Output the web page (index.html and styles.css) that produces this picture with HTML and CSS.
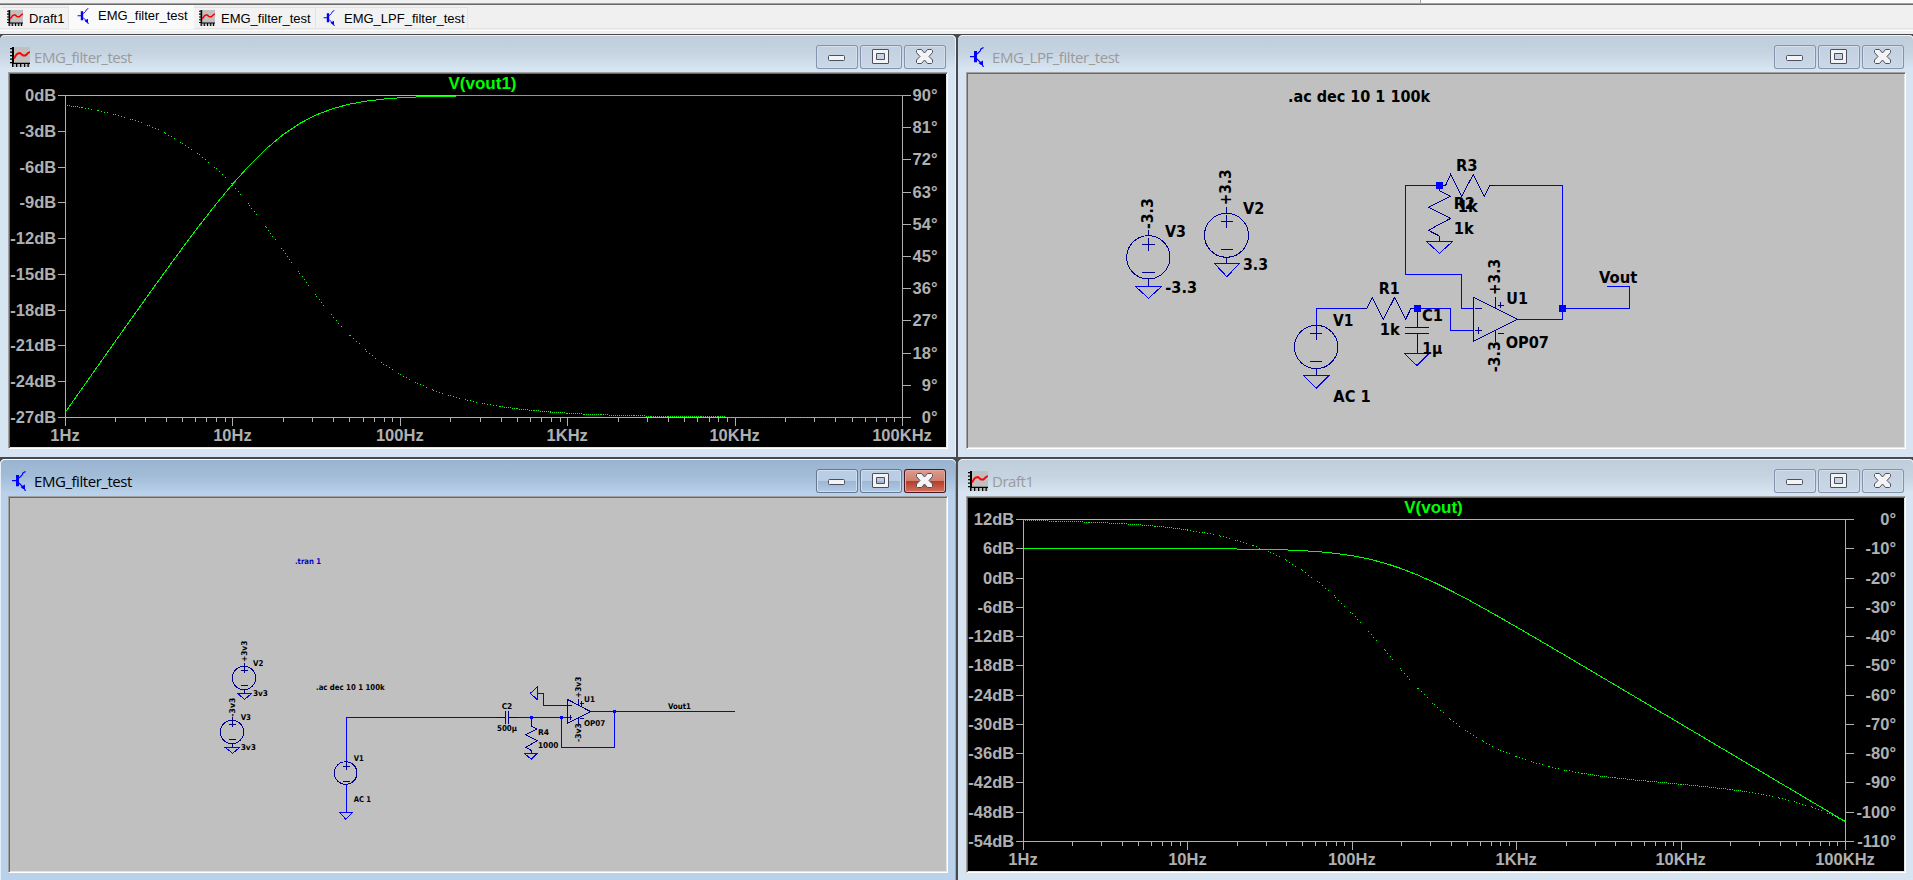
FILE: index.html
```html
<!DOCTYPE html>
<html lang="en">
<head>
<meta charset="utf-8">
<title>LTspice</title>
<link rel="stylesheet" href="styles.css">
</head>
<body>
<svg class="defs" width="0" height="0">
  <symbol id="i-plot" viewBox="0 0 20 20">
    <path fill="#c0c0c0" d="M2 0h18v20H2z"/>
    <path fill="#000" d="M2 0h2v17H2zM2 15.7h18V17H2zM0 1h2v1.3H0zM0 4.5h2v1.3H0zM0 8h2v1.3H0zM0 11.500h2v1.3H0zM0 15h2v1.3H0zM2 17h1.500v3H2zM6 17h1.300v3H6zM10 17h1.300v3H10zM14 17h1.300v3H14zM17.500 17h1.300v3h-1.300z"/>
    <path fill="none" stroke="#f00" stroke-width="1.900" d="M4 11.500L6.500 7.500 8 6.500 10 6 13 8.500 15.500 8.500 18 6 20 5"/>
  </symbol>
  <symbol id="i-sch" viewBox="0 0 20 20">
    <path fill="#00f" d="M2 9h4v1.300H2zM6 4h3v11.300H6z"/>
    <path fill="none" stroke="#00f" stroke-width="1.200" d="M9 7L12 4.200 13 2 15.500.5M9 12l5 5 1.500 3"/>
    <path fill="#00f" d="M10.500 16l4.500-2.500v4.500H13z"/>
  </symbol>
  <symbol id="i-min" viewBox="0 0 42 24"><rect x="12.500" y="10.500" width="16" height="5" rx="1" fill="#f4f4f4" stroke="#4c4f60"/></symbol>
  <symbol id="i-max" viewBox="0 0 42 24"><path fill="#f4f4f4" fill-rule="evenodd" stroke="#4c4f60" d="M13 4.500h15q.5 0 .5.500v13q0 .5-.5.500H13q-.5 0-.5-.5V5q0-.5.5-.5zM16.500 8.500v6h8v-6z"/></symbol>
  <symbol id="i-close" viewBox="0 0 42 24"><path fill="#f4f4f4" stroke="#4c4f60" stroke-linejoin="round" d="M13.500 4.500h4L20.500 8l3-3.500h4l1 1v2L25 11.500l3.500 3.500v2.500l-1 1h-4l-3-3.500-3 3.500h-4l-1-1V15l3.500-3.500-3.500-4v-2z"/></symbol>
</svg>

<header class="topstrip"><div class="topstrip-left"></div><div class="topstrip-right"></div></header>
<nav class="tabs">
  <div class="tab t1"><svg><use href="#i-plot"/></svg><span>Draft1</span></div>
  <div class="tab t2 current"><svg><use href="#i-sch"/></svg><span>EMG_filter_test</span></div>
  <div class="tab t3"><svg><use href="#i-plot"/></svg><span>EMG_filter_test</span></div>
  <div class="tab t4"><svg><use href="#i-sch"/></svg><span>EMG_LPF_filter_test</span></div>
</nav>

<main class="workspace">
  <section class="window">
    <div class="titlebar"><svg class="ico"><use href="#i-plot"/></svg><span class="title">EMG_filter_test</span>
      <div class="btns"><svg class="btn"><use href="#i-min"/></svg><svg class="btn"><use href="#i-max"/></svg><svg class="btn"><use href="#i-close"/></svg></div></div>
    <div class="client dark"><svg id="plot-hp" class="view" viewBox="10 74 936 373"></svg></div>
  </section>

  <section class="window">
    <div class="titlebar"><svg class="ico"><use href="#i-sch"/></svg><span class="title">EMG_LPF_filter_test</span>
      <div class="btns"><svg class="btn"><use href="#i-min"/></svg><svg class="btn"><use href="#i-max"/></svg><svg class="btn"><use href="#i-close"/></svg></div></div>
    <div class="client">
      <svg class="view sch" viewBox="968 74 936 373">
        <text x="1288" y="102" textLength="142" lengthAdjust="spacingAndGlyphs">.ac dec 10 1 100k</text>
        <g transform="translate(1100 150) scale(.333333)">
          <g class="part">
            <circle cx="145" cy="322" r="65"/><path d="M127 283h38M145 264v38M127 367h38M145 240v17M145 387v22"/>
            <circle cx="379.500" cy="256" r="66"/><path d="M362 214h38M379.500 196v38M362 298h38M379.500 171v19M379.500 322v18"/>
          </g>
          <path class="wire" d="M106 409h79l-39.500 36zM343 340h76l-38.500 40z"/>
          <g class="big">
            <text transform="translate(158 237) rotate(-90)" textLength="92" lengthAdjust="spacingAndGlyphs">-3.3</text>
            <text transform="translate(392 166) rotate(-90)" textLength="108" lengthAdjust="spacingAndGlyphs">+3.3</text>
            <text x="195" y="261" textLength="63" lengthAdjust="spacingAndGlyphs">V3</text><text x="196" y="429" textLength="95" lengthAdjust="spacingAndGlyphs">-3.3</text>
            <text x="429" y="192" textLength="64" lengthAdjust="spacingAndGlyphs">V2</text><text x="429" y="360" textLength="75" lengthAdjust="spacingAndGlyphs">3.3</text>
          </g>
        </g>
        <g transform="translate(1270 150) scale(.333333)">
          <path class="wire" d="M508 106H406V373H575V475H611M675 106H878V508H742M878 475H1079V409H1011M139 525V475H275M442 475H542V541H611M469 274h79l-39.500 36zM403 610h74l-36 37zM100 676h77l-38 39z"/>
          <g class="part">
            <path d="M508 106h19l15-33 33 66 35-66 33 66 17-33h15"/>
            <path d="M508 106v16l34 17-67 33 67 33-67 36 33 17v16"/>
            <path d="M275 475h16l16-33 33 66 34-66 33 66 16-33h19"/>
            <path d="M442 475v57M405 532h72M405 550h72M442 550v60"/>
            <path d="M611 442v132l131-66zM614 475h22M614 541h22M625 531v21M676 441v33M676 541v34M684 466h18M693 457v18M684 550h18"/>
            <circle cx="138.500" cy="591" r="65"/><path d="M120 550h36M139 525v45M120 634h36M139 655v21"/>
          </g>
          <path class="node" d="M498 96h21v21h-21zM432 465h21v21h-21zM867 465h21v21h-21z"/>
          <g class="big">
            <text x="558" y="63" textLength="65" lengthAdjust="spacingAndGlyphs">R3</text><text x="551" y="178" textLength="64" lengthAdjust="spacingAndGlyphs">R2</text><text x="563" y="186" textLength="60" lengthAdjust="spacingAndGlyphs">1k</text><text x="551" y="252" textLength="60" lengthAdjust="spacingAndGlyphs">1k</text>
            <text x="326" y="432" textLength="63" lengthAdjust="spacingAndGlyphs">R1</text><text x="329" y="555" textLength="60" lengthAdjust="spacingAndGlyphs">1k</text>
            <text x="189" y="528" textLength="61" lengthAdjust="spacingAndGlyphs">V1</text><text x="190" y="756" textLength="112" lengthAdjust="spacingAndGlyphs">AC 1</text>
            <text x="456" y="513" textLength="63" lengthAdjust="spacingAndGlyphs">C1</text><text x="457" y="612" textLength="60" lengthAdjust="spacingAndGlyphs">1µ</text>
            <text x="709" y="462" textLength="65" lengthAdjust="spacingAndGlyphs">U1</text><text x="707" y="594" textLength="130" lengthAdjust="spacingAndGlyphs">OP07</text>
            <text x="987" y="399" textLength="115" lengthAdjust="spacingAndGlyphs">Vout</text>
            <text transform="translate(690 435) rotate(-90)" textLength="108" lengthAdjust="spacingAndGlyphs">+3.3</text>
            <text transform="translate(690 667) rotate(-90)" textLength="94" lengthAdjust="spacingAndGlyphs">-3.3</text>
          </g>
        </g>
      </svg>
    </div>
  </section>

  <section class="window active">
    <div class="titlebar"><svg class="ico"><use href="#i-sch"/></svg><span class="title">EMG_filter_test</span>
      <div class="btns"><svg class="btn"><use href="#i-min"/></svg><svg class="btn"><use href="#i-max"/></svg><svg class="btn close"><use href="#i-close"/></svg></div></div>
    <div class="client">
      <svg class="view sch" viewBox="10 498 936 373">
        <g transform="translate(200 540) scale(.333333)">
          <g class="part">
            <circle cx="132" cy="414" r="35"/><path d="M123 391h21M134 370v30M123 436h21M134 448v12"/>
            <circle cx="96" cy="576" r="35"/><path d="M87 553h21M97 530v32M87 598h21M97 610v12"/>
            <circle cx="437" cy="699" r="34"/><path d="M428 680h21M439 663v26M428 724h21"/>
          </g>
          <path class="wire" d="M112 460h43l-21 18zM75 622h44l-21 18zM439 663V532H855M439 733V817M418 817h40l-20 21z"/>
          <g class="small">
            <text x="285" y="72" textLength="78" lengthAdjust="spacingAndGlyphs" class="blue">.tran 1</text>
            <text transform="translate(141 366) rotate(-90)" textLength="64" lengthAdjust="spacingAndGlyphs">+3v3</text>
            <text transform="translate(105 530) rotate(-90)" textLength="57" lengthAdjust="spacingAndGlyphs">-3v3</text>
            <text x="159" y="378" textLength="31" lengthAdjust="spacingAndGlyphs">V2</text><text x="159" y="468" textLength="45" lengthAdjust="spacingAndGlyphs">3v3</text>
            <text x="122" y="540" textLength="31" lengthAdjust="spacingAndGlyphs">V3</text><text x="122" y="630" textLength="46" lengthAdjust="spacingAndGlyphs">3v3</text>
            <text x="348" y="450" textLength="206" lengthAdjust="spacingAndGlyphs">.ac dec 10 1 100k</text>
            <text x="461" y="663" textLength="30" lengthAdjust="spacingAndGlyphs">V1</text><text x="461" y="786" textLength="52" lengthAdjust="spacingAndGlyphs">AC 1</text>
          </g>
        </g>
        <g transform="translate(480 660) scale(.333333)">
          <path class="wire" d="M0 172H50M115 172H262M332 154H765M403 154V262H244V172M262 136H190V100H172M172 81v38l-21-19zM133 280h39l-18 18z"/>
          <g class="part">
            <path d="M50 172H76M76 153v38M86 153v38M86 172h29M154 172v27l18 8-35 17 35 18-35 20 18 10v8"/>
            <path d="M262 118v72l70-35zM262 136h14M262 172h14M271 164v16M295 118v18M295 175v17M300 130h12M306 124v13M300 175h12"/>
          </g>
          <path class="node" d="M149 168h10v10h-10zM240 168h10v10h-10zM398 150h10v10h-10z"/>
          <g class="small">
            <text x="65" y="147" textLength="32" lengthAdjust="spacingAndGlyphs">C2</text><text x="51" y="213" textLength="60" lengthAdjust="spacingAndGlyphs">500µ</text>
            <text x="174" y="225" textLength="33" lengthAdjust="spacingAndGlyphs">R4</text><text x="174" y="264" textLength="61" lengthAdjust="spacingAndGlyphs">1000</text>
            <text x="312" y="126" textLength="33" lengthAdjust="spacingAndGlyphs">U1</text><text x="312" y="198" textLength="64" lengthAdjust="spacingAndGlyphs">OP07</text>
            <text x="564" y="147" textLength="69" lengthAdjust="spacingAndGlyphs">Vout1</text>
            <text transform="translate(303 114) rotate(-90)" textLength="64" lengthAdjust="spacingAndGlyphs">+3v3</text>
            <text transform="translate(303 246) rotate(-90)" textLength="57" lengthAdjust="spacingAndGlyphs">-3v3</text>
          </g>
        </g>
      </svg>
    </div>
  </section>

  <section class="window">
    <div class="titlebar"><svg class="ico"><use href="#i-plot"/></svg><span class="title">Draft1</span>
      <div class="btns"><svg class="btn"><use href="#i-min"/></svg><svg class="btn"><use href="#i-max"/></svg><svg class="btn"><use href="#i-close"/></svg></div></div>
    <div class="client dark"><svg id="plot-lp" class="view" viewBox="968 498 936 373"></svg></div>
  </section>
</main>
<script src="plots.js"></script>
</body>
</html>
```

FILE: styles.css
```css
* { box-sizing: border-box; }
body { margin: 0; width: 1913px; height: 880px; overflow: hidden; background: #f0f0f0; font-family: "Liberation Sans", Arial, sans-serif; }
.defs { position: absolute; }

.topstrip { display: flex; height: 5px; border-bottom: 1px solid #696969; box-shadow: inset 0 -1px #a0a0a0; }
.topstrip-left { width: 1421px; height: 3px; border-right: 1px solid #a0a0a0; }
.topstrip-right { flex: 1; height: 3px; background: #fafafa; }

.tabs { display: flex; align-items: flex-start; height: 29px; padding-left: 2px; background: linear-gradient(#f0f0f0 23px, #e3e3e3 23px, #e3e3e3 24px, #f0f0f0 24px, #f0f0f0 25px, #fff 25px, #fff 26px, #f0f0f0 26px); }
.tab { display: flex; align-items: center; height: 22px; margin-top: 2px; border: 1px solid #e3e3e3; border-left-width: 0; font-size: 13px; line-height: 20px; color: #000; white-space: nowrap; background: #f2f2f2; }
.tab svg { width: 16px; height: 16px; flex: none; }
.tab span { padding-top: 1px; }
.tab.current { height: 24px; margin-top: 0; background: #fafafa; border-color: #fafafa; padding-bottom: 3px; }
.t1 { width: 67px; padding-left: 5px; gap: 6px; }
.t2 { width: 125px; padding-left: 7px; gap: 6px; }
.t3 { width: 122px; padding-left: 5px; gap: 6px; }
.t4 { width: 152px; padding-left: 6px; gap: 6px; }

.workspace { display: grid; grid-template-columns: 956px 956px; grid-template-rows: 422px 422px; gap: 2px; padding-top: 1px; background: #4a4a4c; width: 1914px; height: 847px; }
.window { padding: 0 8px 8px; border-radius: 5px 5px 0 0; background: linear-gradient(#bfcddb 0, #c6d3e1 18px, #d7e4f2 34px, #d7e4f2); box-shadow: inset 0 1px #eef3f8, inset -1px 0 #e8f0f8; }
.window.active { background: linear-gradient(#99b4d1 0, #a3bcd8 18px, #b9d1ea 34px, #b9d1ea); box-shadow: inset 0 1px #fff, inset 1px 0 #e4eef8, inset -1px 0 #46c8ee; }
.titlebar { display: flex; height: 37px; padding: 10px 2px 0; }
.ico { width: 20px; height: 20px; margin-top: 2px; flex: none; }
.title { flex: 1; margin-left: 4px; font: 15px/24px "Open Sans", "Noto Sans", sans-serif; letter-spacing: -0.45px; color: #9a9a9a; white-space: nowrap; }
.active .title { color: #000; }
.btns { display: flex; gap: 2px; }
.btn { display: block; width: 42px; height: 24px; border-radius: 3px; background: linear-gradient(#c1cfdf, #cad8e8); box-shadow: inset 0 0 0 1px #8492ad, inset 0 0 0 2px #d3deeb; }
.active .btn { background: linear-gradient(#b9cee5 48%, #9bb6d3 50%, #b4cde8); box-shadow: inset 0 0 0 1px #67788f, inset 0 0 0 2px #cfdfee; }
.active .btn.close { background: linear-gradient(#de9d90 0, #d08070 48%, #b83a25 50%, #d07763); box-shadow: inset 0 0 0 1px #4a1520, inset 0 0 0 2px #e3a99c; }

.client { height: 377px; border: 1px solid; border-color: #a0a0a0 #fff #fff #a0a0a0; background: #c0c0c0; box-shadow: inset 1px 1px #696969, inset -1px -1px #e3e3e3; padding: 1px; }
.client.dark { background: #000; }
.view { display: block; width: 936px; height: 373px; }

.sch { font-family: "DejaVu Sans Condensed", "DejaVu Sans", sans-serif; font-stretch: condensed; font-weight: 700; font-size: 16px; }
.sch text { fill: #000; }
.sch .big { font-size: 48px; }
.sch .small { font-size: 24px; }
.sch .blue { fill: #0000c8; }
.sch path, .sch circle { vector-effect: non-scaling-stroke; fill: none; stroke-width: 1px; shape-rendering: crispEdges; }
.wire { stroke: #00f; }
.part path, .part circle { stroke: #000090; }
.sch .node { fill: #00f; }

.axis { fill: none; stroke: #b0b0b0; shape-rendering: crispEdges; }
.lbl { fill: #b0b0b0; font-weight: 700; font-size: 16.5px; }
.name { fill: #0f0; font-weight: 700; font-size: 17px; text-anchor: middle; }
.end { text-anchor: end; }
.mid { text-anchor: middle; }
.mag { fill: none; stroke: #0f0; shape-rendering: crispEdges; }
.phase { fill: #0f0; shape-rendering: crispEdges; }
```

FILE: plots.js
```js
// Bode plots: solid magnitude trace on the left axis, dotted phase trace on the right axis.
function bode(id, o) {
  const { x0, x1, y0, y1 } = o, dec = (x1 - x0) / 5;
  let axis = `M${x0 - 8} ${y0}H${x1 + 8}M${x0 - 8} ${y1}H${x1 + 8}M${x0} ${y0}V${y1 + 8}M${x1} ${y0}V${y1 + 8}`;
  let out = '';
  o.left.forEach((t, i) => {
    const y = y0 + i * (y1 - y0) / (o.left.length - 1);
    axis += `M${x0 - 8} ${y}h8`;
    out += `<text class="lbl end" x="${x0 - 9.300}" y="${y + 5.500}">${t}dB</text>`;
  });
  o.right.forEach((t, i) => {
    const y = y0 + i * (y1 - y0) / (o.right.length - 1);
    axis += `M${x1} ${y}h8`;
    out += `<text class="lbl end" x="${o.rx}" y="${y + 5.500}">${t}°</text>`;
  });
  ['1Hz', '10Hz', '100Hz', '1KHz', '10KHz', '100KHz'].forEach((t, d) => {
    const x = x0 + d * dec;
    axis += `M${x} ${y1}v8`;
    if (d < 5) for (let k = 2; k < 10; k++) axis += `M${x + dec * Math.log10(k)} ${y1}v4`;
    out += `<text class="lbl mid" x="${x - 0.5}" y="${y1 + 23.500}">${t}</text>`;
  });
  const mag = [], ph = [];
  for (let i = 0; i <= 50; i++) {
    const f = Math.pow(10, i / 10), [m, p] = o.h(f), x = x0 + i * dec / 10;
    mag.push([x, y0 + (o.m0 - m) / o.mspan * (y1 - y0)]);
    ph.push([x, y0 + (o.p0 - p) / o.pspan * (y1 - y0)]);
  }
  let dots = '';
  for (let i = 0; i < 50; i++) {
    const [ax, ay] = ph[i], [bx, by] = ph[i + 1], w = bx - ax, h = by - ay;
    const n = Math.max(Math.abs(w), Math.abs(h)), step = Math.abs(h) < 2.500 ? 2 : 3;
    for (let k = 0; k < n; k += step) {
      // sloped segments carry a short pause in the dot pattern
      if (Math.abs(h) > 3 && k / n > 0.55 && k / n < 0.85) continue;
      dots += `M${Math.floor(ax + w * k / n)} ${Math.floor(ay + h * k / n)}h1v1h-1z`;
    }
  }
  document.getElementById(id).innerHTML =
    `<path class="axis" d="${axis}"/>${out}<path class="mag" d="M${mag.map(p => p.join(' ')).join('L')}"/>` +
    `<path class="phase" d="${dots}"/><text class="name" x="${o.nx}" y="${y0 - 6.500}">${o.name}</text>`;
}

const deg = 180 / Math.PI;
bode('plot-hp', {
  name: 'V(vout1)', nx: 482.500, x0: 65.5, x1: 902.5, y0: 95.5, y1: 417.5, rx: 937.500,
  left: [0, -3, -6, -9, -12, -15, -18, -21, -24, -27],
  right: [90, 81, 72, 63, 54, 45, 36, 27, 18, 9, 0],
  m0: 0, mspan: 27, p0: 90, pspan: 90,
  h: f => [-10 * Math.log10(1 + (21.2 / f) ** 2), Math.atan(21.2 / f) * deg]
});
bode('plot-lp', {
  name: 'V(vout)', nx: 1433.500, x0: 1023.5, x1: 1845.5, y0: 519.5, y1: 841.5, rx: 1896,
  left: [12, 6, 0, -6, -12, -18, -24, -30, -36, -42, -48, -54],
  right: [0, -10, -20, -30, -40, -50, -60, -70, -80, -90, -100, -110],
  m0: 12, mspan: 66, p0: 0, pspan: 110,
  h: f => [6.02 - 10 * Math.log10(1 + (f / 159.15) ** 2), -(Math.atan(f / 159.15) + Math.atan(f / 423000)) * deg]
});
```
